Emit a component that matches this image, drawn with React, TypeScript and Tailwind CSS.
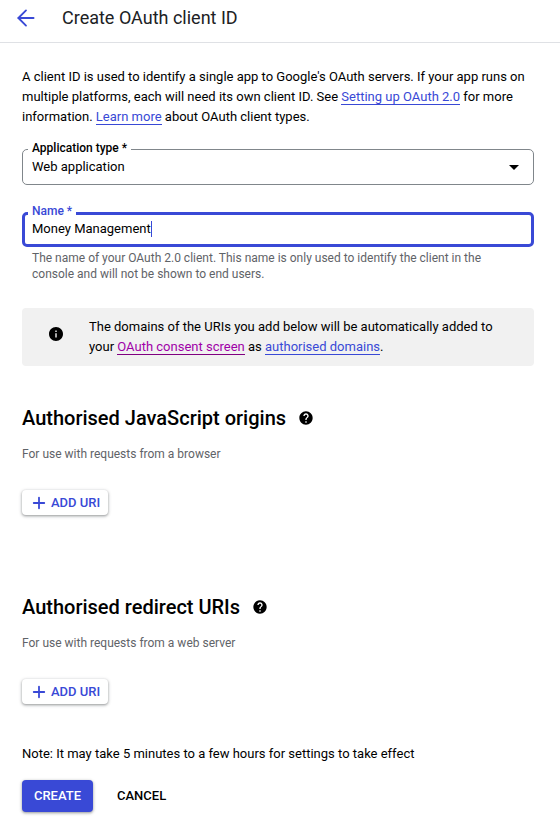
import { ArrowLeft, Plus } from "lucide-react";

const font = { fontFamily: "Roboto, sans-serif" };

function AddUri() {
  return (
    <button className="flex h-[25px] w-[86px] items-center rounded-[4px] bg-white pl-[8px] text-[13px] font-medium text-[#3949d6] shadow-[0_1px_3px_1px_rgba(60,64,67,0.22),0_1px_2px_rgba(60,64,67,0.3)]">
      <Plus size={18} strokeWidth={2.4} className="mr-[3px]" />
      ADD URI
    </button>
  );
}

function Help() {
  return (
    <svg width="16" height="16" viewBox="0 0 24 24" fill="#000">
      <path d="M12 2C6.48 2 2 6.48 2 12s4.48 10 10 10 10-4.48 10-10S17.52 2 12 2zm1 17h-2v-2h2v2zm2.07-7.75-.9.92C13.45 12.9 13 13.5 13 15h-2v-.5c0-1.1.45-2.1 1.17-2.83l1.24-1.26c.37-.36.59-.86.59-1.41 0-1.1-.9-2-2-2s-2 .9-2 2H8c0-2.21 1.79-4 4-4s4 1.79 4 4c0 .88-.36 1.68-.93 2.25z" />
    </svg>
  );
}

export default function App() {
  return (
    <div style={font} className="h-[832px] w-[560px] overflow-hidden bg-white text-[13px] text-[#000]">
      <div className="flex h-[43px] items-start border-b border-[#dfe1e5] pl-[13px] pt-[5px]">
        <ArrowLeft size={26} strokeWidth={1.7} className="text-[#3949d6]" />
        <h1 className="ml-[23px] text-[18px] leading-[26px] text-[#202124]">Create OAuth client ID</h1>
      </div>

      <div className="px-[22px]">
        <p className="mt-[24px] leading-[20px]">
          A client ID is used to identify a single app to Google's OAuth servers. If your app runs on multiple platforms, each will need its own client ID. See{" "}
          <a className="border-b border-[#3949d6] text-[#3949d6]">Setting up OAuth 2.0</a> for more information.{" "}
          <a className="border-b border-[#3949d6] text-[#3949d6]">Learn more</a> about OAuth client types.
        </p>

        <div className="relative mt-[22px] flex h-[36px] w-[512px] items-center justify-between rounded-[5px] border border-[#80868b] pl-[9px] pr-[14px]">
          <span className="absolute -top-[10px] left-[5px] bg-white px-[4px] text-[12px] font-medium leading-[16px]">Application type *</span>
          <span>Web application</span>
          <span className="h-0 w-0 border-x-[5px] border-t-[5px] border-x-transparent border-t-black" />
        </div>

        <div className="relative mt-[27px] flex h-[35px] w-[512px] items-center rounded-[5px] border-[3px] border-[#3949d6] pb-[2px] pl-[7px]">
          <span className="absolute -top-[12px] left-[3px] bg-white px-[4px] text-[12px] font-medium leading-[16px] text-[#3949d6]">Name *</span>
          <span>Money Management</span>
          <span className="h-[16px] w-px bg-[#3949d6]" />
        </div>

        <p className="mt-[3px] w-[480px] pl-[10px] text-[12px] leading-[16px] text-[#5f6368]">
          The name of your OAuth 2.0 client. This name is only used to identify the client in the console and will not be shown to end users.
        </p>

        <div className="mt-[26px] flex h-[58px] w-[512px] items-center rounded-[4px] bg-[#f1f1f1] pl-[27px]">
          <svg width="14" height="14" viewBox="2 2 20 20" fill="#000" className="mb-[6px] shrink-0">
            <path d="M12 2C6.48 2 2 6.48 2 12s4.48 10 10 10 10-4.48 10-10S17.52 2 12 2zm1 15h-2v-6h2v6zm0-8h-2V7h2v2z" />
          </svg>
          <p className="ml-[26px] w-[415px] leading-[20px]">
            The domains of the URIs you add below will be automatically added to your{" "}
            <a className="border-b border-[#800080] text-[#a000a8]">OAuth consent screen</a> as{" "}
            <a className="border-b border-[#3949d6] text-[#3949d6]">authorised domains</a>.
          </p>
        </div>

        <div className="mt-[39px] flex items-center">
          <h2 className="text-[20px] font-medium leading-[26px]">Authorised JavaScript origins</h2>
          <span className="ml-[12px]"><Help /></span>
        </div>
        <p className="mt-[15px] text-[12px] leading-[16px] text-[#5f6368]">For use with requests from a browser</p>
        <div className="mt-[28px]"><AddUri /></div>

        <div className="mt-[79px] flex items-center">
          <h2 className="text-[20px] font-medium leading-[26px]">Authorised redirect URIs</h2>
          <span className="ml-[12px]"><Help /></span>
        </div>
        <p className="mt-[15px] text-[12px] leading-[16px] text-[#5f6368]">For use with requests from a web server</p>
        <div className="mt-[28px]"><AddUri /></div>

        <p className="mt-[40px] leading-[20px]">Note: It may take 5 minutes to a few hours for settings to take effect</p>

        <div className="mt-[16px] flex items-center">
          <button className="h-[32px] w-[71px] rounded-[4px] bg-[#3949d6] text-[13px] font-medium text-white shadow-[0_1px_3px_1px_rgba(60,64,67,0.2),0_1px_2px_rgba(60,64,67,0.3)]">CREATE</button>
          <button className="ml-[24px] text-[13px] font-medium text-[#000]">CANCEL</button>
        </div>
      </div>
    </div>
  );
}
